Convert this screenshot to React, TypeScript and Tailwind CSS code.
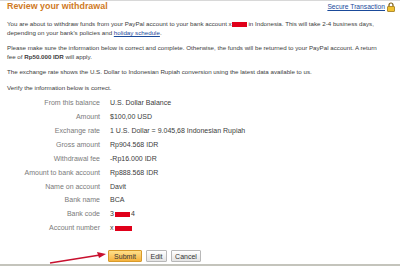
import type { ReactNode } from "react";

const rows: { label: string; value: ReactNode }[] = [
  { label: "From this balance", value: "U.S. Dollar Balance" },
  { label: "Amount", value: "$100,00 USD" },
  { label: "Exchange rate", value: "1 U.S. Dollar = 9.045,68 Indonesian Rupiah" },
  { label: "Gross amount", value: "Rp904.568 IDR" },
  { label: "Withdrawal fee", value: "-Rp16.000 IDR" },
  { label: "Amount to bank account", value: "Rp888.568 IDR" },
  { label: "Name on account", value: "Davit" },
  { label: "Bank name", value: "BCA" },
  {
    label: "Bank code",
    value: (
      <span className="flex items-center">
        3<span className="mx-[1px] inline-block h-[5px] w-[15px] bg-[#e0001a]" />4
      </span>
    ),
  },
  {
    label: "Account number",
    value: (
      <span className="flex items-center">
        x<span className="ml-[1px] inline-block h-[5px] w-[17px] bg-[#e0001a]" />
      </span>
    ),
  },
];

function Padlock() {
  return (
    <svg width="8" height="10" viewBox="0 0 8 10">
      <path d="M2 4.5V3a2 2 0 0 1 4 0v1.5" fill="none" stroke="#7a5a10" strokeWidth="1.2" />
      <rect x="0.5" y="4.5" width="7" height="5" rx="0.5" fill="#f2c230" stroke="#a07818" strokeWidth="0.8" />
    </svg>
  );
}

export default function App() {
  return (
    <div
      className="relative h-[266px] w-[400px] overflow-hidden border-t border-[#d8d8d8] bg-white pl-[7px] pr-[5px] text-[7px] text-[#3c3c3c]"
      style={{ fontFamily: '"Liberation Sans", Arial, sans-serif' }}
    >
      <div className="flex h-[12px] items-center justify-between">
        <h1 className="text-[8.9px] font-bold text-[#cf7a25]">Review your withdrawal</h1>
        <div className="flex items-center gap-[2px]">
          <a className="text-[6.7px] text-[#1a4a9a] underline">Secure Transaction</a>
          <Padlock />
        </div>
      </div>

      <div className="text-[6.2px] leading-[9px]">
        <p className="mt-[6px]">
          You are about to withdraw funds from your PayPal account to your bank account x
          <span className="inline-block h-[5px] w-[15px] bg-[#e0001a] align-middle" /> in Indonesia. This will take 2-4 business days,
          <br />
          depending on your bank's policies and <a className="text-[#1a4a9a] underline">holiday schedule</a>.
        </p>

        <p className="mt-[6px]">
          Please make sure the information below is correct and complete. Otherwise, the funds will be returned to your PayPal account. A return
          <br />
          fee of <b>Rp50.000 IDR</b> will apply.
        </p>

        <p className="mt-[6px]">
          The exchange rate shows the U.S. Dollar to Indonesian Rupiah conversion using the latest data available to us.
        </p>

        <p className="mt-[7px]">Verify the information below is correct.</p>
      </div>

      <div className="mt-[4.5px] grid grid-cols-[93px_1fr] gap-x-[10px]">
        {rows.map((row) => (
          <div key={row.label} className="contents">
            <div className="flex h-[13.9px] items-center justify-end text-[#7a7a7a]">{row.label}</div>
            <div className="flex h-[13.9px] items-center">{row.value}</div>
          </div>
        ))}
      </div>

      <div className="mt-[15px] flex gap-[4px] pl-[101px]">
        <button className="h-[12px] w-[34px] rounded-[1px] border border-[#d89a2a] bg-gradient-to-b from-[#ffe08a] to-[#f5b23a] text-[7px] leading-none text-[#333]">
          Submit
        </button>
        <button className="h-[12px] w-[21px] rounded-[1px] border border-[#b8b8b8] bg-gradient-to-b from-white to-[#e4e4e4] text-[7px] leading-none text-[#333]">
          Edit
        </button>
        <button className="h-[12px] w-[30px] rounded-[1px] border border-[#b8b8b8] bg-gradient-to-b from-white to-[#e4e4e4] text-[7px] leading-none text-[#333]">
          Cancel
        </button>
      </div>

      <svg className="absolute left-[48px] top-[249px]" width="60" height="16" viewBox="0 0 60 16">
        <path d="M2 13 L52 5" stroke="#c8102e" strokeWidth="1.6" fill="none" />
        <path d="M58 4 L49 2 L51 8 Z" fill="#c8102e" />
      </svg>

      <div className="absolute bottom-0 left-0 h-[2px] w-full bg-[#c4c4bc]" />
    </div>
  );
}
